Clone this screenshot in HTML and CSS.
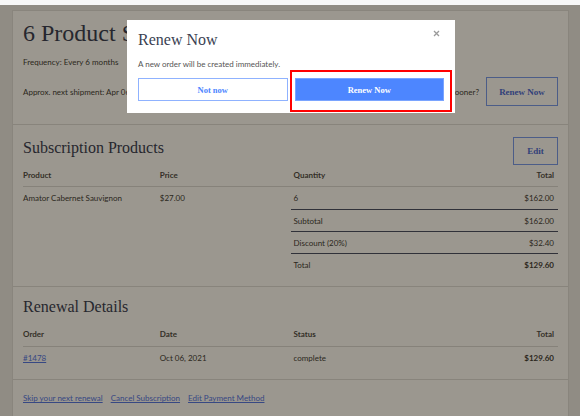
FILE: index.html
```html
<!DOCTYPE html>
<html lang="en">
<head>
  <meta charset="UTF-8" />
  <meta name="viewport" content="width=device-width, initial-scale=1.0"/>
  <title>My Subscription</title>
  <link rel="stylesheet" href="styles.css">
</head>
<body>
  <div class="topbar"></div>

  <div class="page">
    <div class="sub-card">
      <!-- Subscription header -->
      <section class="sub-section sub-head">
        <h1>6 Product Subscription</h1>
        <p class="meta">Frequency: Every 6 months</p>
        <div class="next-row">
          <p>Approx. next shipment: Apr 06, 2022</p>
          <div class="sooner">
            <span>Need your wine sooner?</span>
            <button class="btn-outline btn-renew">Renew Now</button>
          </div>
        </div>
      </section>

      <!-- Products -->
      <section class="sub-section">
        <div class="section-title">
          <h2>Subscription Products</h2>
          <button class="btn-outline btn-edit">Edit</button>
        </div>
        <div class="sub-table">
          <div class="cell th">Product</div>
          <div class="cell th">Price</div>
          <div class="cell th">Quantity</div>
          <div class="cell th num">Total</div>

          <div class="cell">Amator Cabernet Sauvignon</div>
          <div class="cell">$27.00</div>
          <div class="cell">6</div>
          <div class="cell num">$162.00</div>

          <div class="cell sum">Subtotal</div>
          <div class="cell sum num">$162.00</div>
          <div class="cell sum">Discount (20%)</div>
          <div class="cell sum num">$32.40</div>
          <div class="cell sum">Total</div>
          <div class="cell sum num strong">$129.60</div>
        </div>
      </section>

      <!-- Renewals -->
      <section class="sub-section renewals">
        <div class="section-title">
          <h2>Renewal Details</h2>
        </div>
        <div class="sub-table">
          <div class="cell th">Order</div>
          <div class="cell th">Date</div>
          <div class="cell th">Status</div>
          <div class="cell th num">Total</div>

          <div class="cell"><a href="#">#1478</a></div>
          <div class="cell">Oct 06, 2021</div>
          <div class="cell">complete</div>
          <div class="cell num strong">$129.60</div>
        </div>
      </section>

      <div class="sub-links">
        <a href="#">Skip your next renewal</a>
        <a href="#">Cancel Subscription</a>
        <a href="#">Edit Payment Method</a>
      </div>
    </div>
  </div>

  <div class="overlay"></div>

  <div class="modal">
    <button class="modal-close" aria-label="Close">
      <svg width="7" height="7" viewBox="0 0 7 7"><path d="M1 1L6 6M6 1L1 6" stroke="#9a9a9a" stroke-width="1.3"/></svg>
    </button>
    <h3>Renew Now</h3>
    <p>A new order will be created immediately.</p>
    <div class="modal-actions">
      <button class="btn-ghost">Not now</button>
      <button class="btn-primary highlight">Renew Now</button>
    </div>
  </div>
</body>
</html>
```

FILE: styles.css
```css
* {
  box-sizing: border-box;
  margin: 0;
  padding: 0;
}

body {
  font-family: 'Lato', sans-serif;
  font-size: 8px;
  line-height: 12px;
  color: #333;
  background: #ebebeb;
  overflow: hidden;
}

.topbar {
  height: 5px;
  background: #f7f7f7;
  position: relative;
  z-index: 3;
}

.page {
  padding: 5px 11px 0 12px;
}

.sub-card {
  background: #fff;
  border: 1px solid #dedede;
}

.sub-section {
  padding: 5px 10px 11px 10px;
  border-bottom: 1px solid #dcdcdc;
}

h1, h2, h3 {
  font-family: 'Liberation Serif', serif;
  font-weight: normal;
  color: #2b3350;
}

/* Header */
.sub-head h1 {
  font-size: 24px;
  line-height: 34px;
  margin-bottom: 6px;
}

.next-row {
  display: flex;
  justify-content: space-between;
  align-items: center;
  margin-top: 9px;
  margin-bottom: 7px;
}

.sooner {
  display: flex;
  align-items: center;
  gap: 7px;
}

button {
  font-family: 'Liberation Serif', serif;
  font-weight: bold;
  cursor: pointer;
}

.btn-outline {
  background: #fff;
  border: 1px solid #6f95f2;
  color: #3f63d8;
  font-size: 9px;
}

.btn-renew {
  width: 72px;
  height: 29px;
}

/* Section titles */
.section-title {
  display: flex;
  justify-content: space-between;
  align-items: flex-start;
  padding-top: 7px;
  min-height: 35px;
}

.section-title h2 {
  font-size: 16px;
  line-height: 22px;
}

.btn-edit {
  width: 45px;
  height: 28px;
}

/* Tables */
.sub-table {
  display: grid;
  grid-template-columns: repeat(4, 1fr);
}

.cell {
  padding: 5px 3px 4.3px 3px;
}

.cell:nth-child(4n+1) {
  padding-left: 0;
}

.cell.th {
  font-weight: bold;
  color: #444;
  padding-top: 4px;
  padding-bottom: 5.3px;
  border-bottom: 1px solid #d9d9d9;
}

.cell.num {
  text-align: right;
  padding-right: 4px;
}

.cell.sum {
  border-top: 1px solid #3c4563;
}

.cell.sum:nth-of-type(odd) {
  grid-column: 3;
  padding-left: 3px;
}

.cell.sum.num {
  grid-column: 4;
}

.strong {
  font-weight: bold;
}

.renewals .section-title {
  padding-top: 4px;
  min-height: 32px;
}

a {
  color: #4a6fea;
}

.sub-links {
  display: flex;
  gap: 8px;
  padding: 12px 10px 20px;
}

/* Dim layer behind the dialog */
.overlay {
  position: fixed;
  top: 5px;
  left: 0;
  right: 0;
  bottom: 0;
  background: rgba(33, 24, 6, 0.45);
  z-index: 2;
}

/* Renew dialog */
.modal {
  position: fixed;
  top: 20px;
  left: 50%;
  margin-left: -163px;
  width: 328px;
  background: #fff;
  padding: 10px 11px 12px;
  z-index: 4;
}

.modal h3 {
  font-size: 16px;
  line-height: 20px;
  color: #3a3f52;
}

.modal p {
  margin-top: 7.5px;
  font-size: 8px;
  color: #555;
}

.modal-close {
  position: absolute;
  top: 10px;
  right: 15px;
  background: none;
  border: none;
  line-height: 0;
}

.modal-actions {
  display: flex;
  gap: 7px;
  margin-top: 8.5px;
}

.modal-actions button {
  flex: 1;
  height: 23px;
  font-size: 8.5px;
}

.btn-ghost {
  background: #fff;
  border: 1px solid #8fb2ff;
  color: #4d86ff;
}

.btn-primary {
  background: #4d86ff;
  border: 1px solid #7aa4ff;
  color: #fff;
}

.highlight {
  position: relative;
}

.highlight::after {
  content: "";
  position: absolute;
  top: -9px;
  left: -6px;
  right: -9px;
  bottom: -12px;
  border: 2px solid #ff0000;
}
```
